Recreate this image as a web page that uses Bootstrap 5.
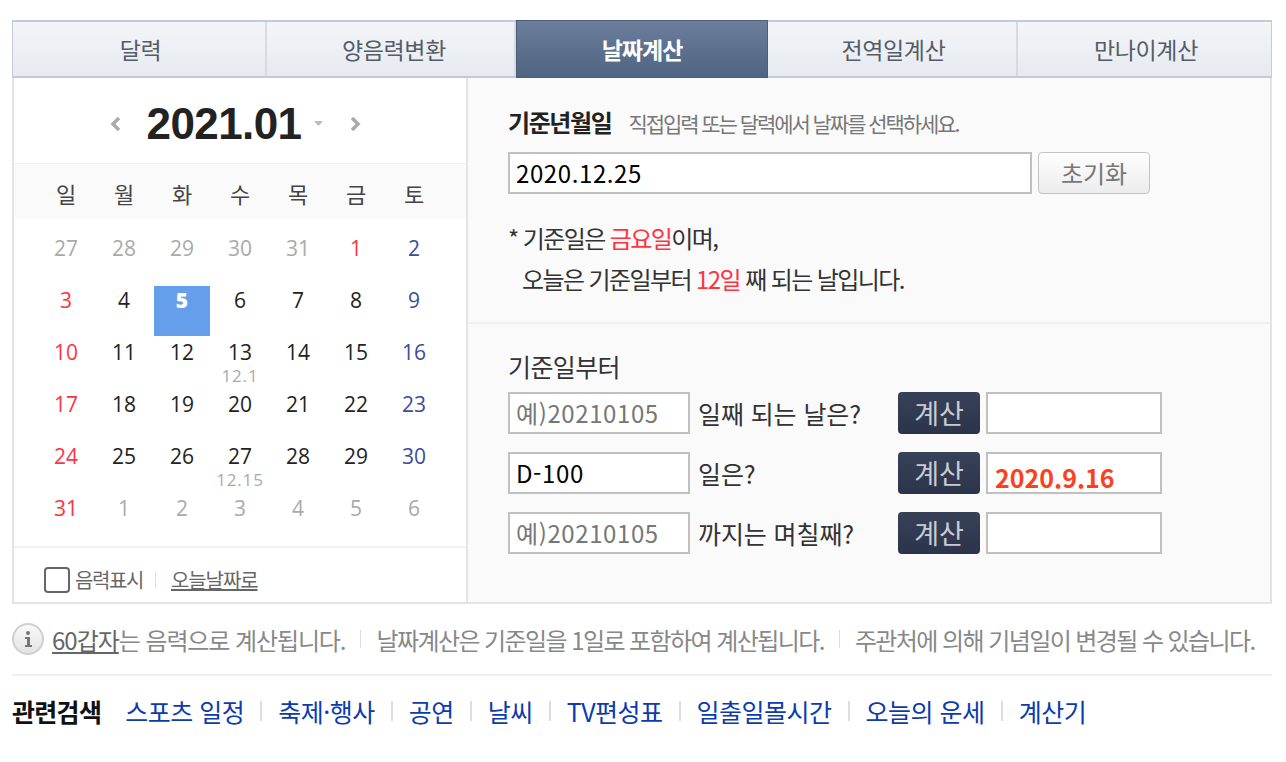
<!DOCTYPE html>
<html lang="ko"><head><meta charset="utf-8"><title>날짜계산</title>
<link href="https://cdn.jsdelivr.net/npm/bootstrap@5.3.0/dist/css/bootstrap.min.css" rel="stylesheet">
<style>
html,body{margin:0;background:#fff}
body{font-family:"Liberation Sans","Noto Sans CJK KR",sans-serif;color:#333;height:762px;overflow:hidden}
.wrap{width:1260px;margin:20px 0 0 12px}
.tabs{height:58px;border:solid #c3ccd6;border-width:2px 0;background:linear-gradient(#f3f5f8,#e6eaf0);border-left:1px solid #c3ccd6;border-right:1px solid #c3ccd6}
.tabi{height:100%;font-size:23px;letter-spacing:-.4px;color:#555c66;border-right:2px solid #d5dbe2;font-family:"Noto Sans CJK KR",sans-serif;padding-left:3px}
.tabi:last-child{border-right:0}
.tabi.on{background:linear-gradient(#6b7f9c,#4e6481);color:#fff;font-weight:700;margin:-2px 0;height:58px;border:1px solid #4b5f7b;border-bottom-width:1px;letter-spacing:-1px;padding-left:0}
.t1{width:254px}.t2{width:249px;padding-left:7px}.t3{width:252px}.t4{width:250px}
.panel{height:526px;border:solid #e4e4e4;border-width:0 2px 2px}
.left{width:454px;border-right:2px solid #e4e4e4;background:#fff}
.right{background:#fafafa;min-width:0}
.mhead{height:85px;padding:6px 9px 0 0}
.ym{font:700 44px/1 "Liberation Sans",sans-serif;color:#222;letter-spacing:-.6px;margin:0 11px 0 26px}
.wk{height:56px;background:#fafafa;padding:3px 23px 0;border-top:1px solid #f2f2f2}
.wk span,.cellx{width:58px;text-align:center}
.wk span{font:22px/1 "Noto Sans CJK KR",sans-serif;color:#444}
.days{padding:3px 23px 0;height:329px;border-bottom:2px solid #f2f2f2;align-content:flex-start}
.cellx{height:52px;font:21px/52px "Open Sans",sans-serif;color:#222;position:relative}
.cellx.gy{color:#aaa}.cellx.rd{color:#ff333f}.cellx.bl{color:#3a4d9a}
.cellx small{position:absolute;left:0;right:0;top:40px;font-size:17px;line-height:1.2;color:#aaa;letter-spacing:.8px}
.cellx.sel{color:#fff;font-weight:800}
.cellx.sel::before{content:"";position:absolute;left:1px;right:1px;top:12px;height:50px;background:#659fec;z-index:0}
.cellx.sel b{position:relative}
.lfoot{padding:10px 0 0 30px;height:53px;font:20px "Noto Sans CJK KR",sans-serif;letter-spacing:-1.4px;color:#666}
.lfoot a{color:#666;letter-spacing:-1.1px}
.cb{width:26px;height:26px;border:2px solid #666;border-radius:4px;display:block;margin-right:5px;background:#fff}
.vsep{width:1px;height:16px;background:#ddd;margin:0 15px 0 12px}
.topform{height:246px;padding:26px 40px 0;border-bottom:2px solid #f0f0f0}
.lab{font:700 24px "Noto Sans CJK KR",sans-serif;color:#222;letter-spacing:-1.4px}
.hint{font:21px "Noto Sans CJK KR",sans-serif;letter-spacing:-2.05px;color:#777;margin-left:17px;padding-top:2px}
.formline{margin-top:13px}
.fld{height:42px;border:2px solid #c0c0c0;background:#fff;font:24px "Noto Sans CJK KR",sans-serif;color:#000;padding:0 6px;line-height:38px;letter-spacing:.6px;overflow:hidden}
.w0{width:524px}
.reset{width:112px;height:42px;margin-left:6px;border:1px solid #c4c4c4;border-radius:4px;background:linear-gradient(#fff,#ececec);font:24px "Noto Sans CJK KR",sans-serif;color:#777;line-height:38px;text-align:center;padding:0}
.desc{font:24px/41px "Noto Sans CJK KR",sans-serif;letter-spacing:-1.6px;color:#333;margin-top:23px}
.desc em{font-style:normal;color:#ff333f}
.ind{margin-left:14px}
.botform{padding:25px 40px 0}
.sub{font:25px/34px "Noto Sans CJK KR",sans-serif;color:#333;letter-spacing:-.6px;margin-bottom:9px}
.rowx{height:42px;margin-bottom:18px}
.w1{width:182px}.w2{width:176px}
.fld.ph{color:#777}
.qtxt{width:208px;font:25px "Noto Sans CJK KR",sans-serif;padding-left:8px;color:#333;letter-spacing:-.1px;white-space:nowrap}
.calc{width:82px;height:42px;background:linear-gradient(#374158,#2b344a);border:0;border-radius:4px;color:#c9ccd3;font:27px "Noto Sans CJK KR",sans-serif;padding:0;line-height:36px;margin-right:6px}
.ans{color:#ff3f1c;font-weight:700;font-size:25px;line-height:46px;padding-left:7px;letter-spacing:0}
.notes{height:72px;font:24px "Noto Sans CJK KR",sans-serif;letter-spacing:-1.58px;color:#888;border-bottom:2px solid #f0f0f0;white-space:nowrap}
.notes a{color:#666;letter-spacing:-1px}
.nfirst{letter-spacing:-1.1px}
.sep2{width:1px;height:18px;background:#ddd;margin:0 15px}
.ii{width:32px;height:32px;margin-right:8px;flex:none}
.rel{height:70px;font:25px "Noto Sans CJK KR",sans-serif;white-space:nowrap}
.rel b{color:#111;letter-spacing:-.7px;margin-right:24px;font-weight:700}
.rel a{color:#0b3bae;text-decoration:none;letter-spacing:-.5px}
.sep3{width:2px;height:20px;background:#ddd;margin:0 16px}
</style></head><body>
<div class="wrap">
 <div class="tabs d-flex align-items-center text-center">
  <div class="tabi t1 d-flex align-items-center justify-content-center">달력</div>
  <div class="tabi t2 d-flex align-items-center justify-content-center">양음력변환</div>
  <div class="tabi t3 on d-flex align-items-center justify-content-center">날짜계산</div>
  <div class="tabi t4 d-flex align-items-center justify-content-center">전역일계산</div>
  <div class="tabi d-flex align-items-center justify-content-center flex-grow-1">만나이계산</div>
 </div>
 <div class="panel d-flex">
  <div class="left flex-shrink-0">
   <div class="mhead d-flex align-items-center justify-content-center">
    <svg width="12" height="18" viewBox="0 0 12 18"><path d="M10 3 4 9l6 6" fill="none" stroke="#aaa" stroke-width="3.500"/></svg>
    <span class="ym">2021.01</span>
    <svg width="14" height="8" viewBox="0 0 14 8"><path d="M2 1h9L6.500 6z" fill="#bbb"/></svg>
    <svg class="ms-4" width="12" height="18" viewBox="0 0 12 18"><path d="M2 3l6 6-6 6" fill="none" stroke="#aaa" stroke-width="3.500"/></svg>
   </div>
   <div class="wk d-flex align-items-center"><span>일</span><span>월</span><span>화</span><span>수</span><span>목</span><span>금</span><span>토</span></div>
   <div class="days d-flex flex-wrap">
    <div class="cellx gy">27</div><div class="cellx gy">28</div><div class="cellx gy">29</div><div class="cellx gy">30</div><div class="cellx gy">31</div><div class="cellx rd">1</div><div class="cellx bl">2</div>
    <div class="cellx rd">3</div><div class="cellx">4</div><div class="cellx sel"><b>5</b></div><div class="cellx">6</div><div class="cellx">7</div><div class="cellx">8</div><div class="cellx bl">9</div>
    <div class="cellx rd">10</div><div class="cellx">11</div><div class="cellx">12</div><div class="cellx">13<small>12.1</small></div><div class="cellx">14</div><div class="cellx">15</div><div class="cellx bl">16</div>
    <div class="cellx rd">17</div><div class="cellx">18</div><div class="cellx">19</div><div class="cellx">20</div><div class="cellx">21</div><div class="cellx">22</div><div class="cellx bl">23</div>
    <div class="cellx rd">24</div><div class="cellx">25</div><div class="cellx">26</div><div class="cellx">27<small>12.15</small></div><div class="cellx">28</div><div class="cellx">29</div><div class="cellx bl">30</div>
    <div class="cellx rd">31</div><div class="cellx gy">1</div><div class="cellx gy">2</div><div class="cellx gy">3</div><div class="cellx gy">4</div><div class="cellx gy">5</div><div class="cellx gy">6</div>
   </div>
   <div class="lfoot d-flex align-items-center"><span class="cb"></span><span>음력표시</span><span class="vsep"></span><a href="#" class="text-decoration-underline">오늘날짜로</a></div>
  </div>
  <div class="right flex-grow-1">
   <div class="topform">
    <div class="d-flex align-items-center"><span class="lab">기준년월일</span><span class="hint">직접입력 또는 달력에서 날짜를 선택하세요.</span></div>
    <div class="d-flex formline"><div class="fld w0">2020.12.25</div><button class="reset">초기화</button></div>
    <div class="desc">* 기준일은 <em>금요일</em>이며,<br><span class="ind">오늘은 기준일부터 <em>12일</em> 째 되는 날입니다.</span></div>
   </div>
   <div class="botform">
    <div class="sub">기준일부터</div>
    <div class="rowx d-flex align-items-center"><div class="fld ph w1">예)20210105</div><div class="qtxt">일째 되는 날은?</div><button class="calc">계산</button><div class="fld w2"></div></div>
    <div class="rowx d-flex align-items-center"><div class="fld w1">D-100</div><div class="qtxt">일은?</div><button class="calc">계산</button><div class="fld w2 ans">2020.9.16</div></div>
    <div class="rowx d-flex align-items-center"><div class="fld ph w1">예)20210105</div><div class="qtxt">까지는 며칠째?</div><button class="calc">계산</button><div class="fld w2"></div></div>
   </div>
  </div>
 </div>
 <div class="notes d-flex align-items-center">
  <svg class="ii" viewBox="0 0 32 32"><defs><linearGradient id="g" x1="0" y1="0" x2="0" y2="1"><stop offset="0" stop-color="#fafafa"/><stop offset="1" stop-color="#e2e2e2"/></linearGradient></defs><circle cx="16" cy="16" r="15" fill="url(#g)" stroke="#cfcfcf" stroke-width="2"/><circle cx="16" cy="10" r="2" fill="#777"/><path d="M13 14h5v8h2v2h-7v-2h2v-6h-2z" fill="#777"/></svg>
  <span class="nfirst"><a href="#">60갑자</a>는 음력으로 계산됩니다.</span><span class="sep2"></span><span>날짜계산은 기준일을 1일로 포함하여 계산됩니다.</span><span class="sep2"></span><span>주관처에 의해 기념일이 변경될 수 있습니다.</span>
 </div>
 <div class="rel d-flex align-items-center">
  <b>관련검색</b><a href="#">스포츠 일정</a><span class="sep3"></span><a href="#">축제·행사</a><span class="sep3"></span><a href="#">공연</a><span class="sep3"></span><a href="#">날씨</a><span class="sep3"></span><a href="#">TV편성표</a><span class="sep3"></span><a href="#">일출일몰시간</a><span class="sep3"></span><a href="#">오늘의 운세</a><span class="sep3"></span><a href="#">계산기</a>
 </div>
</div>
<script src="https://cdn.jsdelivr.net/npm/bootstrap@5.3.0/dist/js/bootstrap.bundle.min.js"></script>
</body></html>
